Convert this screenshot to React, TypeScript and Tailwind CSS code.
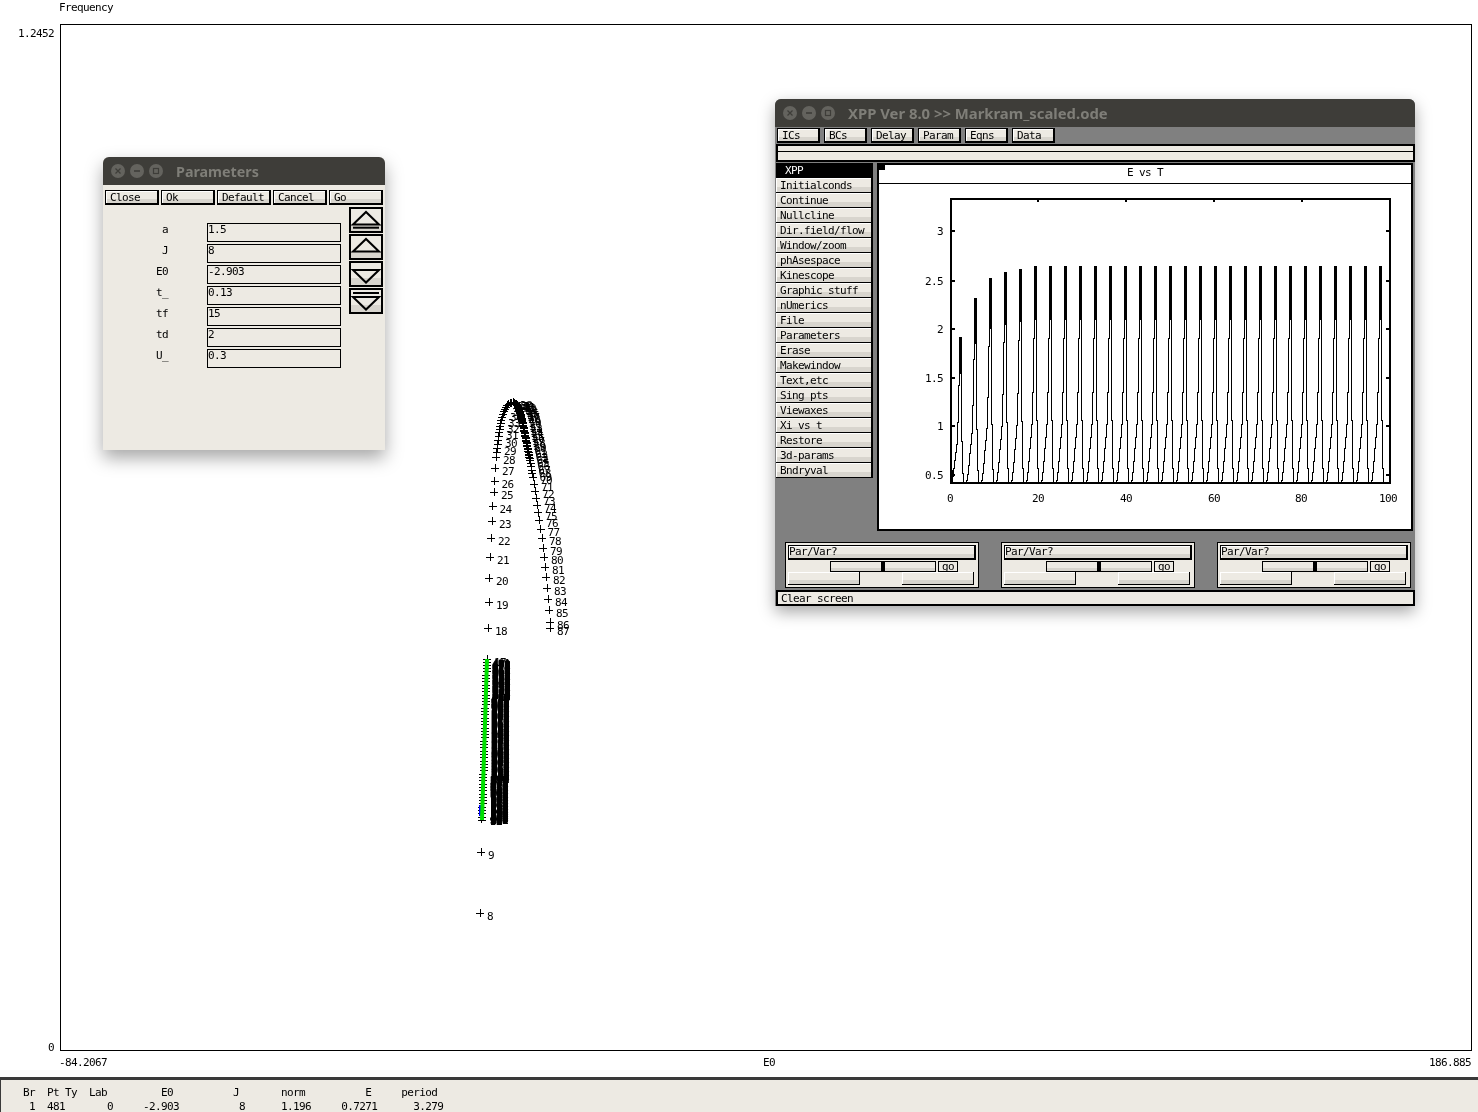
import React from "react";

const GRAD = "bg-[linear-gradient(#edeae3_0,#edeae3_65%,#d8d5ce_65%,#d8d5ce_100%)]";

function Btn({ label, w }: { label: string; w: string }) {
  return (
    <div className={`${w} h-[15px] ${GRAD} border-l border-t border-r-2 border-b-2 border-black pl-[4px] leading-[13px] shadow-[inset_1px_1px_0_#fff] overflow-hidden whitespace-pre`}>
      {label}
    </div>
  );
}

function TitleBar({ title, tw }: { title: string; tw: string }) {
  const c = "w-[14px] h-[14px] rounded-full bg-[#64635e] flex items-center justify-center";
  return (
    <div className="h-[28px] rounded-t-[6px] bg-[#3e3d39] flex items-center pl-[8px] shrink-0">
      <div className="flex gap-[5px]">
        <div className={c}>
          <svg width="8" height="8" viewBox="0 0 8 8"><path d="M1.5 1.5l5 5M6.5 1.5l-5 5" stroke="#3e3d39" strokeWidth="1.2" /></svg>
        </div>
        <div className={c}>
          <svg width="8" height="8" viewBox="0 0 8 8"><path d="M1 4h6" stroke="#3e3d39" strokeWidth="1.6" /></svg>
        </div>
        <div className={c}>
          <svg width="8" height="8" viewBox="0 0 8 8"><rect x="1.5" y="1.5" width="5" height="5" fill="none" stroke="#3e3d39" strokeWidth="1.2" /></svg>
        </div>
      </div>
      <div className={`font-['Noto_Sans',sans-serif] font-bold tracking-normal text-[#7f7e78] ml-[13px] ${tw}`}>{title}</div>
    </div>
  );
}

function Arrow({ kind }: { kind: number }) {
  const up = kind < 2;
  const dbl = kind === 0 || kind === 3;
  return (
    <div className="w-[34px] h-[26px] border-2 border-black bg-[linear-gradient(#edeae3_0,#edeae3_70%,#d8d5ce_70%,#d8d5ce_100%)]">
      <svg width="30" height="22" viewBox="0 0 30 22">
        {up ? (
          <path d="M2 15.5L15 3L28 15.5Z" fill="none" stroke="#000" strokeWidth="2" />
        ) : (
          <path d="M2 7L15 19.5L28 7Z" fill="none" stroke="#000" strokeWidth="2" />
        )}
        {dbl && (up ? <path d="M2 18.7h26" stroke="#000" strokeWidth="2" /> : <path d="M2 3h26" stroke="#000" strokeWidth="2" />)}
      </svg>
    </div>
  );
}

const PARAMS: [string, string][] = [
  ["a", "1.5"],
  ["J", "8"],
  ["E0", "-2.903"],
  ["t_", "0.13"],
  ["tf", "15"],
  ["td", "2"],
  ["U_", "0.3"],
];

function ParamWindow() {
  return (
    <div className="absolute left-[103px] top-[157px] w-[282px] h-[293px] flex flex-col rounded-t-[6px] bg-[#edeae3] shadow-[0_8px_18px_rgba(0,0,0,0.35)]">
      <TitleBar title="Parameters" tw="text-[14.3px] pt-px" />
      <div className="flex gap-[2px] pl-[2px] pt-[5px]">
        {["Close", "Ok", "Default", "Cancel", "Go"].map((b) => (
          <Btn key={b} label={b} w="w-[54px]" />
        ))}
      </div>
      <div className="flex pt-[2px]">
        <div className="w-[238px] pt-[16px] flex flex-col gap-[2px]">
          {PARAMS.map(([k, v]) => (
            <div key={k} className="flex h-[19px] leading-[13px]">
              <div className="w-[65px] text-right">{k}</div>
              <div className="ml-[39px] w-[134px] border border-black pl-0 overflow-hidden leading-[12px]">{v}</div>
            </div>
          ))}
        </div>
        <div className="ml-[8px] flex flex-col gap-px">
          {[0, 1, 2, 3].map((k) => (
            <Arrow key={k} kind={k} />
          ))}
        </div>
      </div>
    </div>
  );
}

const MENU = [
  "Initialconds", "Continue", "Nullcline", "Dir.field/flow", "Window/zoom", "phAsespace", "Kinescope", "Graphic stuff", "nUmerics", "File",
  "Parameters", "Erase", "Makewindow", "Text,etc", "Sing pts", "Viewaxes", "Xi vs t", "Restore", "3d-params", "Bndryval",
];

function spikePaths() {
  const tops = [337, 298, 278, 272, 269];
  const base = 483;
  // staircase outline of one spike: [dx from peak, fraction of height]
  const left: [number, number][] = [[-9, 0.015], [-8, 0.05], [-7, 0.1], [-6, 0.16], [-5, 0.21], [-4, 0.27], [-3, 0.42], [-2, 0.67], [-1, 0.755]];
  const right: [number, number][] = [[1, 0.29], [2, 0.07], [3, 0]];
  let d = "M951 478V470H952V483";
  let thick = "";
  for (let n = 0; n < 29; n++) {
    const px = 960 + 15 * n;
    const top = tops[n] ?? 266;
    const h = base - top;
    for (const [dx, f] of left) d += `H${px + dx}V${Math.round(base - f * h)}`;
    d += `H${px}V${top}H${px + 1}`;
    for (const [dx, f] of right) d += `V${Math.round(base - f * h)}H${px + dx + 1}`;
    d += `V${base}`;
    thick += `M${px} ${top}V${Math.round(base - 0.755 * h)}`;
  }
  return { d, thick };
}

function Graph() {
  const xt = [1038, 1126, 1214, 1302];
  const yt: [number, string][] = [[231, "3"], [281, "2.5"], [329, "2"], [378, "1.5"], [426, "1"], [475, "0.5"]];
  const xl: [number, string][] = [[950, "0"], [1038, "20"], [1126, "40"], [1214, "60"], [1301, "80"], [1388, "100"]];
  const s = spikePaths();
  return (
    <svg width="532" height="345" viewBox="879 184 532 345" className="block">
      <rect x="951" y="199" width="439" height="284" fill="none" stroke="#000" strokeWidth="2" shapeRendering="crispEdges" />
      <path d={xt.map((x) => `M${x} 200v2`).join("") + yt.map(([y]) => `M952 ${y}h3M1386 ${y}h3`).join("")} stroke="#000" strokeWidth="2" shapeRendering="crispEdges" />
      <path d={s.d} fill="none" stroke="#000" strokeWidth="1" shapeRendering="crispEdges" />
      <path d={s.thick} fill="none" stroke="#000" strokeWidth="2" shapeRendering="crispEdges" />
      {yt.map(([y, t]) => (
        <text key={t} x="943" y={y + 4} textAnchor="end" fill="#000">{t}</text>
      ))}
      {xl.map(([x, t]) => (
        <text key={t} x={x} y="502" textAnchor="middle" fill="#000">{t}</text>
      ))}
    </svg>
  );
}

function SliderBox() {
  const lo = "w-[72px] h-[13px] bg-[linear-gradient(#edeae3_0,#edeae3_65%,#d8d5ce_65%,#d8d5ce_100%)] border-r border-b border-black shadow-[inset_1px_1px_0_#fff]";
  return (
    <div className="w-[194px] h-[46px] border border-black bg-[#edeae3] pl-[2px] pt-[2px] flex flex-col">
      <div className={`w-[188px] h-[15px] ${GRAD} border-l border-t border-r-2 border-b-2 border-black leading-[12px] shadow-[inset_1px_1px_0_#fff]`}>Par/Var?</div>
      <div className="flex h-[11px] mt-[1px] ml-[42px]">
        <div className={`w-[106px] h-[11px] ${GRAD} border border-black flex justify-center`}>
          <div className="w-[4px] bg-black" />
        </div>
        <div className="ml-[2px] w-[20px] h-[11px] border border-black text-center leading-[10px]">go</div>
      </div>
      <div className="flex mt-[0px] gap-[42px]">
        <div className={lo} />
        <div className={lo} />
      </div>
    </div>
  );
}

function XppWindow() {
  return (
    <div className="absolute left-[775px] top-[99px] w-[640px] h-[507px] flex flex-col rounded-t-[6px] bg-[#808080] shadow-[0_6px_16px_rgba(0,0,0,0.35)]">
      <TitleBar title="XPP Ver 8.0 >> Markram_scaled.ode" tw="text-[14.85px]" />
      <div className="flex gap-[4px] pl-[2px] pt-[1px]">
        {["ICs", "BCs", "Delay", "Param", "Eqns", "Data"].map((b) => (
          <Btn key={b} label={b} w="w-[43px]" />
        ))}
      </div>
      <div className="ml-px mt-[1px] h-[18px] border-2 border-black bg-[#edeae3] flex flex-col">
        <div className="h-[5px] border-b border-black box-content" />
      </div>
      <div className="flex ml-px mt-px">
        <div className="w-[97px] flex flex-col">
          <div className="h-[15px] bg-black text-white pl-[9px] pt-px leading-[14px]">XPP</div>
          {MENU.map((m) => (
            <div key={m} className={`h-[15px] ${GRAD} border-b border-r-2 border-black pl-[4px] pt-px leading-[14px] shadow-[inset_1px_1px_0_#fff] whitespace-pre`}>{m}</div>
          ))}
        </div>
        <div className="ml-[4px] w-[536px] h-[368px] border-2 border-black bg-white flex flex-col relative">
          <div className="absolute left-0 top-0 w-[6px] h-[5px] bg-black" />
          <div className="h-[19px] border-b border-black text-center leading-[15px]">E vs T</div>
          <Graph />
        </div>
      </div>
      <div className="flex gap-[22px] pl-[10px] mt-[11px]">
        <SliderBox />
        <SliderBox />
        <SliderBox />
      </div>
      <div className="ml-px mt-[2px] h-[16px] border-2 border-black bg-[#edeae3] pl-[3px] leading-[13px]">Clear screen</div>
    </div>
  );
}

const A: Record<number, [number, number]> = {
  17: [487, 659], 18: [488, 628], 19: [489, 602], 20: [489, 578], 21: [490, 557], 22: [491, 538], 23: [492, 521],
  24: [492.5, 506], 25: [494, 492], 26: [494.5, 481], 27: [495, 468], 28: [496, 457], 29: [497, 448], 30: [498, 440], 31: [499, 432], 32: [500, 426],
  33: [501, 420], 34: [503, 414], 35: [505, 409], 36: [507, 405], 37: [510, 403], 38: [513, 402], 42: [517, 405], 46: [520, 412], 50: [522, 420],
  54: [524, 430], 60: [527, 445], 65: [530, 460], 70: [533, 477], 72: [535, 491], 74: [537, 505], 76: [539, 520], 78: [542, 538],
  79: [543, 548], 80: [544, 557], 81: [545, 567], 82: [546, 577], 83: [547, 588], 84: [548, 599], 85: [549, 610], 86: [550, 622], 87: [550, 628],
};

function upper(): { n: number; x: number; y: number }[] {
  const keys = Object.keys(A).map(Number).sort((a, b) => a - b);
  const out: { n: number; x: number; y: number }[] = [];
  for (let i = 0; i < keys.length - 1; i++) {
    const a = keys[i], b = keys[i + 1];
    for (let n = a; n < b; n++) {
      const t = (n - a) / (b - a);
      out.push({ n, x: A[a][0] + (A[b][0] - A[a][0]) * t, y: A[a][1] + (A[b][1] - A[a][1]) * t });
    }
  }
  out.push({ n: 87, x: 550, y: 628 });
  return out;
}

function Diagram() {
  const pts = upper();
  const all = [{ n: 8, x: 480, y: 913 }, { n: 9, x: 481, y: 852 }, ...pts];
  let plus = all.map((p) => `M${p.x - 4} ${p.y}h8M${p.x} ${p.y - 4}v8`).join("");
  // the arc near the top is packed much tighter than one mark per label
  for (let i = 0; i < pts.length - 1; i++) {
    if (pts[i].n < 28 || pts[i].n > 64) continue;
    const mx = (pts[i].x + pts[i + 1].x) / 2;
    const my = (pts[i].y + pts[i + 1].y) / 2;
    plus += `M${mx - 4} ${my}h8M${mx} ${my - 4}v8`;
  }
  let dense = "";
  for (let y = 662; y < 822; y += 3.3) {
    const x = 487 - ((y - 659) / 161) * 5;
    dense += `M${x - 4} ${y}h8M${x} ${y - 3}v6`;
  }
  const block: { n: number; x: number; y: number }[] = [];
  for (let n = 88; n <= 481; n++) {
    const t = (n - 88) / 393;
    const y = Math.round(825 - 158 * Math.pow(t, 1.4));
    const x = Math.round(490 + ((825 - y) * 2) / 165);
    block.push({ n, x, y });
  }
  return (
    <svg width="1410" height="1025" viewBox="61 25 1410 1025" className="block">
      <path d={plus} stroke="#000" strokeWidth="1" fill="none" shapeRendering="crispEdges" />
      <path d={dense} stroke="#000" strokeWidth="1" fill="none" shapeRendering="crispEdges" />
      {all.map((p) => (
        <text key={p.n} x={p.x + 7} y={p.y + 7} fill="#000">{p.n}</text>
      ))}
      {block.map((p) => (
        <text key={p.n} x={p.x} y={p.y} fill="#000">{p.n}</text>
      ))}
      <rect x="479" y="805" width="5" height="11" fill="#0000ff" />
      <path d="M487 659L482 820" stroke="#00e000" strokeWidth="4" />
    </svg>
  );
}

export default function App() {
  return (
    <div className="relative w-[1478px] h-[1112px] overflow-hidden bg-white text-black flex flex-col font-['DejaVu_Sans_Mono',monospace] text-[11px] tracking-[-0.62px] [will-change:transform]">
      <div className="h-[24px] pl-[59px] pt-px leading-[13px]">Frequency</div>
      <div className="flex h-[1027px]">
        <div className="w-[60px] h-[1030px] shrink-0 flex flex-col justify-between text-right pr-[6px] pt-[3px] leading-[13px]">
          <div>1.2452</div>
          <div>0</div>
        </div>
        <div className="w-[1412px] border border-black overflow-hidden">
          <Diagram />
        </div>
      </div>
      <div className="h-[26px] pl-[59px] pr-[7px] pt-[5px] flex justify-between leading-[13px]">
        <div>-84.2067</div>
        <div className="ml-[2px]">E0</div>
        <div>186.885</div>
      </div>
      <div className="h-[35px] border-t-[3px] border-[#3a3a3a] border-l bg-[#edeae3] pl-[22px] pt-[6px]">
        <pre className="font-['DejaVu_Sans_Mono',monospace] leading-[14px]">{"Br  Pt Ty  Lab         E0          J       norm          E     period\n 1  481       0     -2.903          8      1.196     0.7271      3.279"}</pre>
      </div>
      <ParamWindow />
      <XppWindow />
    </div>
  );
}
